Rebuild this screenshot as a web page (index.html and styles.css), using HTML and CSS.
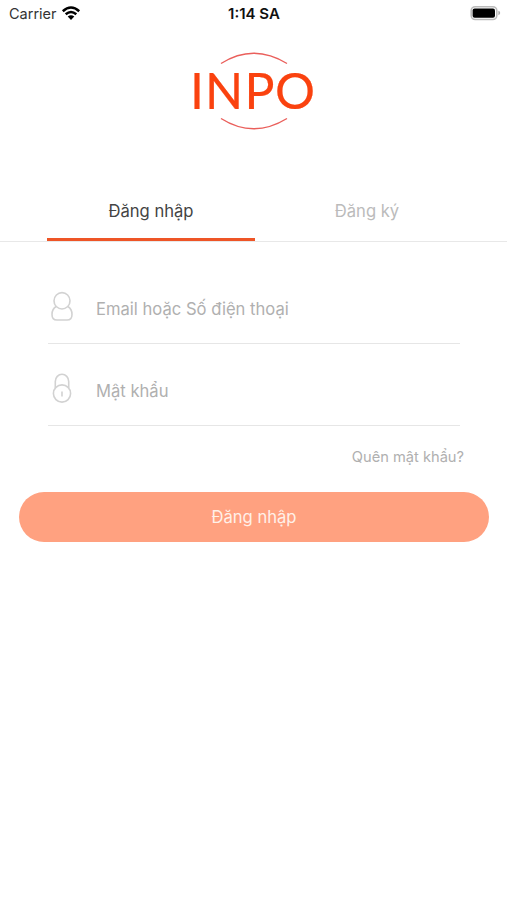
FILE: index.html
```html
<!DOCTYPE html>
<html lang="vi">

<head>
	<meta charset="utf-8">
	<title>INPO - Đăng nhập</title>
	<link rel="stylesheet" href="styles.css">
</head>

<body>
	<header class="status-bar">
		<div class="carrier">
			<span class="carrier-name">Carrier</span>
			<svg class="wifi" width="20" height="15" viewBox="0 0 20 15">
				<path d="M1.8 5.2Q10 -2.2 18.2 5.2M4.7 8.3Q10 3.6 15.3 8.3" fill="none" stroke="#000" stroke-width="2.5" />
				<path d="M6.7 10.6Q10 7.8 13.3 10.6L10 14Z" fill="#000" />
			</svg>
		</div>
		<div class="time">1:14 SA</div>
		<svg class="battery" width="31" height="16" viewBox="0 0 31 16">
			<rect x="1.2" y="1.7" width="25.6" height="12.8" rx="4" fill="#fff" stroke="#bbb" stroke-width="1.6" />
			<rect x="2.6" y="3.4" width="22.4" height="9.4" rx="2" fill="#000" />
			<path d="M28.4 5.8Q30.2 6.4 30.2 8T28.4 10.2Z" fill="#aaa" />
		</svg>
	</header>

	<div class="logo">
		<svg width="150" height="90" viewBox="0 0 150 90">
			<path d="M42 18.500Q74.500 -2 108 18.500M42 73.500Q74.500 94 108 73.500" fill="none" stroke="#ea5f5b" stroke-width="1.4" />
			<text class="logo-text" x="11 26 65.500 96" y="64">INPO</text>
		</svg>
	</div>

	<nav class="tabs">
		<a class="tab active"><span>Đăng nhập</span></a>
		<a class="tab"><span>Đăng ký</span></a>
	</nav>

	<main class="login">
		<div class="field">
			<svg class="field-icon" width="28" height="34" viewBox="0 0 28 34">
				<path d="M8.200 16.500A8 8.200 0 1 1 19.800 16.500C22.500 18 24 20.500 24 24.500C24 28.500 22.500 30 19 30H9C5.500 30 4 28.500 4 24.500C4 20.500 5.500 18 8.200 16.500ZM8.200 16.500Q14 21.500 19.800 16.500" />
			</svg>
			<span class="placeholder">Email hoặc Số điện thoại</span>
		</div>
		<div class="field">
			<svg class="field-icon" width="28" height="34" viewBox="0 0 28 34">
				<circle cx="14" cy="21.500" r="8.600" />
				<path d="M7.300 16V9.500A6.700 7.300 0 0 1 20.700 9.500V16M14 19.500V24.500" />
			</svg>
			<span class="placeholder">Mật khẩu</span>
		</div>
		<a class="forgot">Quên mật khẩu?</a>
		<button class="submit" type="button">Đăng nhập</button>
	</main>
</body>

</html>
```

FILE: styles.css
```css
body {
	margin: 0;
	background: #fff;
	font-family: Inter, "Liberation Sans", sans-serif;
	color: #444;
}

.status-bar {
	display: grid;
	grid-template-columns: 1fr auto 1fr;
	align-items: center;
	height: 28px;
	padding: 0 6px 0 9px;
	color: #111;
}

.carrier {
	display: flex;
	align-items: center;
	gap: 4px;
}

.carrier-name {
	margin-top: -2px;
	font-size: 14.5px;
	color: #333;
}

.wifi {
	margin-top: -2px;
}

.time {
	margin: -2px 2px 0 0;
	font-size: 15px;
	font-weight: 600;
}

.battery {
	justify-self: end;
	margin-top: -2px;
}

/* logo */
.logo {
	display: flex;
	justify-content: center;
	height: 107px;
	padding: 17px 0 28px;
}

.logo-text {
	font-family: Lato, sans-serif;
	font-size: 50px;
	fill: #fa420f;
	stroke: #fa420f;
	stroke-width: .2;
}

/* tabs */
.tabs {
	display: flex;
	height: 61px;
	padding: 0 28px 0 47px;
	border-bottom: 1px solid #e8e8e8;
}

.tab {
	display: flex;
	flex: 1;
	align-items: center;
	justify-content: center;
	box-sizing: border-box;
	padding-top: 3px;
	border-bottom: 3px solid transparent;
	font-size: 16.600px;
	color: #bbb;
}

.tab.active {
	flex: 0 0 208px;
	border-color: #ee5526;
	color: #444;
}

/* form */
.login {
	display: flex;
	flex-direction: column;
	padding: 20px 18px 0 19px;
}

.field {
	display: flex;
	align-items: center;
	gap: 20px;
	height: 81px;
	margin: 0 29px;
	border-bottom: 1px solid #e6e6e6;
}

.field-icon {
	margin-top: 9px;
	fill: none;
	stroke: #d2d2d2;
	stroke-width: 1.6;
}

.placeholder {
	padding-top: 13px;
	font-size: 16.600px;
	color: #b0b0b0;
}

.forgot {
	align-self: flex-end;
	margin: 22px 25px 0 0;
	font-size: 14.650px;
	line-height: 18px;
	color: #b0b0b0;
}

.submit {
	height: 50px;
	margin-top: 26px;
	padding: 0;
	border: 0;
	border-radius: 25px;
	background: #ffa180;
	font-family: inherit;
	font-size: 16.600px;
	color: #fff0e8;
}
```
